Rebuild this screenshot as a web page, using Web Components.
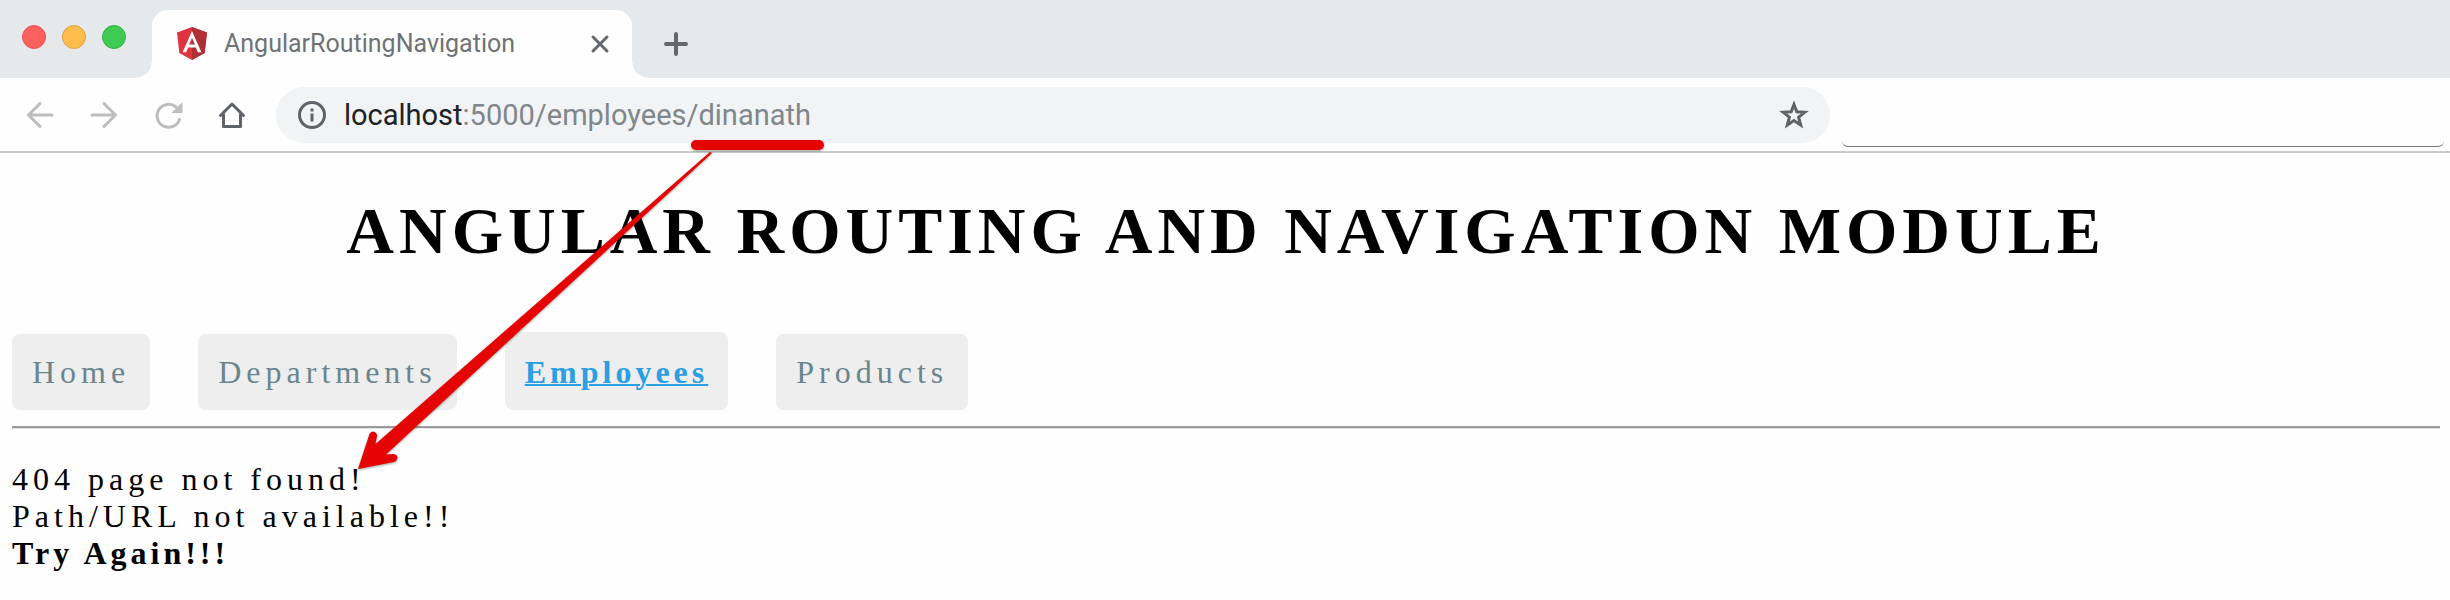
<!DOCTYPE html>
<html lang="en">
<head>
<meta charset="utf-8">
<title>AngularRoutingNavigation</title>
<style>
  body { margin: 0; background: #fefefe; font-family: "Liberation Serif", serif; }
</style>
</head>
<body>
<browser-window></browser-window>

<template id="browser-window">
  <style>
    :host { display: block; position: relative; }
  </style>
  <tab-strip>AngularRoutingNavigation</tab-strip>
  <tool-bar></tool-bar>
  <routing-app></routing-app>
  <mark-up></mark-up>
</template>

<template id="tab-strip">
  <style>
    :host { display: flex; align-items: flex-end; height: 78px; background: #e5e9ec; font-family: Roboto, sans-serif; }
    .lights { display: flex; gap: 16px; padding: 0 26px 29px 22px; }
    .lights i { width: 24px; height: 24px; border-radius: 50%; box-sizing: border-box; border: 1px solid #e8544f; background: #fc615d; }
    .lights i:nth-child(2) { border-color: #dfa143; background: #fdbc4b; }
    .lights i:nth-child(3) { border-color: #2fb141; background: #3fca54; }
    .tab { position: relative; box-sizing: border-box; width: 480px; height: 68px; padding: 0 22px 0 24px; display: flex; align-items: center; background: #fefefe; border-radius: 16px 16px 0 0; }
    .tab::before, .tab::after { content: ""; position: absolute; bottom: 0; width: 16px; height: 16px; }
    .tab::before { right: 100%; background: radial-gradient(circle at 0 0, transparent 15px, #fefefe 16px); }
    .tab::after { left: 100%; background: radial-gradient(circle at 100% 0, transparent 15px, #fefefe 16px); }
    .title { flex: 1; margin-left: 16px; font-size: 25px; line-height: 32px; color: #6f7377; }
    button { border: 0; padding: 0; background: none; display: flex; }
    .new { margin: 0 0 20px 30px; }
  </style>
  <div class="lights"><i></i><i></i><i></i></div>
  <div class="tab">
    <svg width="32" height="34" viewBox="0 0 32 34"><path fill="#dd3440" d="M16 0 31 5.5 28.7 26 16 33 3.3 26 1 5.5z"/><path fill="#b02e36" d="M16 0 31 5.5 28.7 26 16 33z"/><path fill="#fff" fill-rule="evenodd" d="M16 4 6.6 25.2h3.6l1.9-4.7h7.8l1.9 4.7h3.6zM16 10.8 18.9 17.6h-5.8z"/></svg>
    <span class="title"><slot></slot></span>
    <button aria-label="Close tab"><svg width="20" height="20" viewBox="0 0 20 20" stroke="#64686c" stroke-width="3" stroke-linecap="round"><path d="M3 3l14 14M17 3L3 17"/></svg></button>
  </div>
  <button class="new" aria-label="New tab"><svg width="28" height="28" viewBox="0 0 28 28" stroke="#64686c" stroke-width="4" stroke-linecap="round"><path d="M14 4v20M4 14h20"/></svg></button>
</template>

<template id="tool-bar">
  <style>
    :host { display: flex; align-items: center; height: 73px; padding: 0 6px 0 24px; border-bottom: 2px solid #cbcbcb; background: #fefefe; font-family: Roboto, sans-serif; }
    button { border: 0; padding: 0; background: none; display: flex; }
    .nav { display: flex; gap: 32px; margin-right: 28px; }
    svg { fill: none; stroke: #bbbdbf; stroke-width: 3; stroke-linecap: round; stroke-linejoin: round; flex: none; }
    svg.dark { stroke: #5f6368; }
    .address { flex: 1514; min-width: 0; box-sizing: border-box; height: 56px; padding: 0 20px; display: flex; align-items: center; border-radius: 28px; background: #f1f3f4; }
    .url { flex: 1; margin-left: 16px; font-size: 29px; line-height: 36px; color: #80868b; }
    .url b { font-weight: 400; color: #202124; }
    .blank { flex: 602; box-sizing: border-box; height: 64px; margin-left: 12px; border-bottom: 1px solid #777; border-radius: 6px; }
  </style>
  <div class="nav">
    <button aria-label="Back"><svg width="32" height="32" viewBox="0 0 32 32"><path d="M28 16H5M16 4.5 4.5 16 16 27.5"/></svg></button>
    <button aria-label="Forward"><svg width="32" height="32" viewBox="0 0 32 32"><path d="M4 16h23M16 4.5 27.5 16 16 27.5"/></svg></button>
    <button aria-label="Reload"><svg width="32" height="32" viewBox="0 0 32 32"><path d="M27.5 20.5A11.500 11.500 0 1 1 24 8"/><path d="M30.500 3V14H19.500z" fill="#bbbdbf" stroke="none"/></svg></button>
    <button aria-label="Home"><svg class="dark" width="32" height="32" viewBox="0 0 32 32"><path d="M4.500 16.500 16 5l11.500 11.500M7.500 15v12.500h17V15"/></svg></button>
  </div>
  <div class="address">
    <svg class="dark" width="32" height="32" viewBox="0 0 32 32"><circle cx="16" cy="16" r="12.500"/><path d="M14.500 14.500h3v8h-3zM14.500 9.500h3v3h-3z" fill="#5f6368" stroke="none"/></svg>
    <span class="url"><b>localhost</b>:5000/employees/dinanath</span>
    <button aria-label="Bookmark this page"><svg class="dark" width="32" height="32" viewBox="0 0 32 32"><path stroke-linejoin="miter" d="M16 5.500 18.800 12.800 26.800 13.200 20.600 18.200 22.700 26 16 21.600 9.300 26 11.400 18.200 5.200 13.200 13.200 12.800z"/></svg></button>
  </div>
  <div class="blank"></div>
</template>

<template id="routing-app">
  <style>
    :host { display: block; padding: 40px 10px 12px 12px; font-family: "Liberation Serif", serif; font-size: 32px; line-height: 36px; letter-spacing: 5px; color: #000; }
    h1 { margin: 0 0 63px; text-align: center; font-size: 66px; line-height: 76px; font-weight: 700; }
    nav { display: flex; align-items: flex-end; gap: 48px; }
    hr { height: 2px; margin: 16px 0 32px; border: 0; background: #9a9a9a; border-bottom: 1px solid #e2e2e2; }
    p { margin: 0; line-height: 37px; }
    strong { letter-spacing: 4px; }
  </style>
  <h1>ANGULAR ROUTING AND NAVIGATION MODULE</h1>
  <nav>
    <nav-link>Home</nav-link>
    <nav-link>Departments</nav-link>
    <nav-link active>Employees</nav-link>
    <nav-link>Products</nav-link>
  </nav>
  <hr>
  <p>404 page not found!<br>Path/URL not available!!<br><strong>Try Again!!!</strong></p>
</template>

<template id="nav-link">
  <style>
    :host { display: block; }
    a { display: block; padding: 20px; border-radius: 8px; background: #eee; color: #6b858d; text-decoration: none; }
    :host([active]) a { padding-top: 22px; color: #2b9fe4; font-weight: 700; letter-spacing: 4px; text-decoration: underline; text-decoration-thickness: 2px; }
  </style>
  <a href="#"><slot></slot></a>
</template>

<template id="mark-up">
  <style>
    :host { position: absolute; left: 350px; top: 136px; pointer-events: none; }
    svg { display: block; filter: drop-shadow(0 1px 1px #0006); }
  </style>
  <svg width="480" height="340" viewBox="350 136 480 340" fill="#e50404">
    <rect x="691" y="140" width="133" height="10" rx="5"/>
    <path d="M710 152 375.500 444 377 436Q377 432 373 431.500Q370.500 431.500 369.500 434L358 469 394 462Q397.500 460.500 397.500 457Q396.500 454 393 454L386 454.500 712 153Z"/>
  </svg>
</template>

<script>
  for (const name of ["nav-link", "tab-strip", "tool-bar", "routing-app", "mark-up", "browser-window"]) {
    customElements.define(name, class extends HTMLElement {
      constructor() {
        super();
        this.attachShadow({ mode: "open" }).append(document.getElementById(name).content.cloneNode(true));
      }
    });
  }
</script>
</body>
</html>
